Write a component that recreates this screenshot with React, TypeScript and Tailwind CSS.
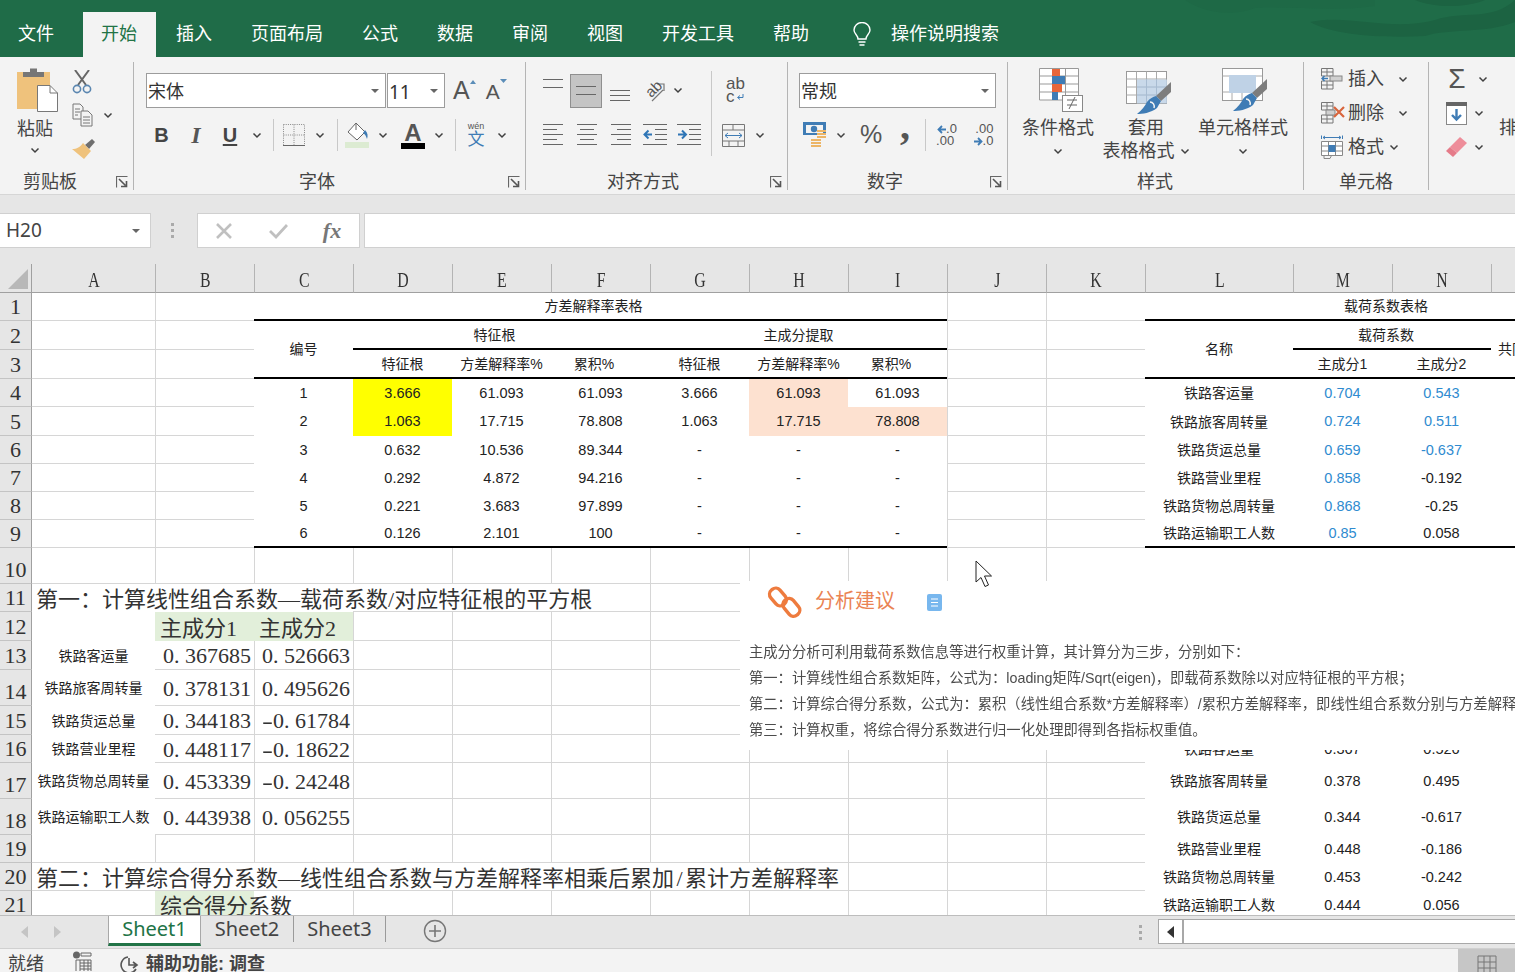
import React from 'react';

const sans = "[font-family:'Liberation_Sans','Noto_Sans_CJK_SC',sans-serif]";
const song = "[font-family:'Liberation_Serif','Noto_Sans_CJK_SC',serif] text-[22px] text-[#333]";
const digit = "[font-family:'Liberation_Serif',serif] text-[22px] text-[#333]";
const line = 'border-l border-b border-[#d6d6d6]';
const under = 'border-b border-[#d6d6d6]';
const cell = 'flex items-center justify-center whitespace-nowrap pt-[1px]';
const lab = 'text-[14px]';
const thick = 'border-b-2 border-black';
const blue = 'text-[#2f8bd0]';
const peach = 'bg-[#fde1d0]';
const yellow = 'bg-[#ffff00]';

const Chev = ({ className = '' }: { className?: string }) => (
  <svg width="10" height="7" viewBox="0 0 10 7" className={`shrink-0 ${className}`}>
    <path d="M1.5 1.5 L5 5 L8.5 1.5" fill="none" stroke="#404040" strokeWidth="1.5" />
  </svg>
);

const Launcher = ({ className = '' }: { className?: string }) => (
  <svg width="12" height="12" viewBox="0 0 12 12" className={`shrink-0 ${className}`}>
    <path d="M0.5 11.5 V0.5 H11.5" fill="none" stroke="#666" strokeWidth="1.2" />
    <path d="M3 3 L9.5 9.5 M10.5 5 V10.5 H5" fill="none" stroke="#555" strokeWidth="1.6" />
  </svg>
);

const DropTri = ({ className = '' }: { className?: string }) => (
  <svg width="8" height="4" viewBox="0 0 8 4" className={`shrink-0 ${className}`}>
    <path d="M0 0 H8 L4 4 Z" fill="#666" />
  </svg>
);

const Sep = ({ h = 'h-[32px]' }: { h?: string }) => <div className={`w-px bg-[#c8c8c8] ${h}`} />;

const Box = ({ w, children }: { w: string; children?: React.ReactNode }) => (
  <div className={`flex h-full shrink-0 items-center justify-center ${w}`}>{children}</div>
);

// alignment icons, one row of bars per width
const Bars = ({ rows, align = 'left', gap = 5 }: { rows: number[]; align?: string; gap?: number }) => (
  <svg width="20" height={(rows.length - 1) * gap + 1} className="shrink-0">
    {rows.map((w, i) => {
      const x = align === 'left' ? 0 : align === 'center' ? (20 - w) / 2 : 20 - w;
      return <rect key={i} x={x} y={i * gap} width={w} height="1" fill="#666" />;
    })}
  </svg>
);

const IndentBars = ({ flip }: { flip?: boolean }) => (
  <svg width="24" height="21" viewBox="0 0 24 21" className="shrink-0">
    <path d="M0 0.5 H24 M12 5.5 H24 M12 10.5 H24 M12 15.5 H24 M0 20.5 H24" stroke="#666" fill="none" />
    {flip ? (
      <path d="M1 10.5 H8 M5 6.5 L9 10.5 L5 14.5" stroke="#2e75b6" strokeWidth="2" fill="none" />
    ) : (
      <path d="M9 10.5 H2 M5.5 6.5 L1.5 10.5 L5.5 14.5" stroke="#2e75b6" strokeWidth="2" fill="none" />
    )}
  </svg>
);

const PasteIcon = () => (
  <svg width="42" height="46" viewBox="0 0 42 46" className="shrink-0">
    <rect x="0" y="5" width="33" height="37" fill="#efc27c" />
    <path d="M6 5 H27 V10 H6 Z M13 1.5 H20 V5 H13 Z" fill="#767676" />
    <path d="M20.5 18.5 H33 L40.5 26 V44.5 H20.5 Z" fill="#fff" stroke="#777" />
    <path d="M33 18.5 V26 H40.5" fill="none" stroke="#777" />
  </svg>
);

const Scissors = () => (
  <svg width="20" height="24" viewBox="0 0 20 24" className="shrink-0">
    <path d="M3 0 L14 15 M17 0 L6 15" stroke="#666" strokeWidth="2" fill="none" />
    <circle cx="5" cy="19" r="3.6" fill="none" stroke="#5a86b0" strokeWidth="1.6" />
    <circle cx="15" cy="19" r="3.6" fill="none" stroke="#5a86b0" strokeWidth="1.6" />
  </svg>
);

const CopyIcon = () => (
  <svg width="22" height="24" viewBox="0 0 22 24" className="shrink-0">
    <path d="M1 1 H8 L11 4 V16 H1 Z M3 6 H8 M3 9 H8 M3 12 H6" fill="#f3f3f3" stroke="#777" />
    <path d="M9 8 H16 L20 12 V23 H9 Z M11 14 H18 M11 17 H18 M11 20 H18" fill="#f3f3f3" stroke="#777" />
  </svg>
);

const Brush = () => (
  <svg width="24" height="22" viewBox="0 0 24 22" className="shrink-0">
    <path d="M13 7 L20 1 L23 4 L17 11 Z" fill="#6f6f6f" />
    <path d="M11 5 L19 13 L12 21 L0 11 C5 11 8 9 11 5 Z" fill="#efc27c" />
  </svg>
);

const BorderIcon = () => (
  <svg width="22" height="22" viewBox="0 0 22 22" className="shrink-0">
    <path d="M0.5 0.5 H21.5 V21 M0.5 0.5 V21 M11 0.5 V21 M0.5 11 H21.5" fill="none" stroke="#888" strokeDasharray="1 1.2" />
    <path d="M0 21.5 H22" stroke="#666" />
  </svg>
);

const FillIcon = () => (
  <svg width="24" height="26" viewBox="0 0 24 26" className="shrink-0">
    <rect x="0" y="20" width="24" height="6" fill="#dcebd2" />
    <path d="M11 1 L20 10 L12 18 L3 10 Z" fill="#fff" stroke="#666" />
    <path d="M11 2 V8" stroke="#666" />
    <path d="M20 8 C23 11 23 14 22 17 C21 14 20 12 18 11 Z" fill="#3f7cb5" />
  </svg>
);

const CondFormat = () => (
  <svg width="44" height="46" viewBox="0 0 44 46" className="shrink-0">
    <path d="M0.5 0.5 H39.5 V32 H0.5 Z M13.5 0.5 V32 M26.5 0.5 V32 M0.5 8 H39.5 M0.5 16 H39.5 M0.5 24 H39.5" fill="#fff" stroke="#999" />
    <rect x="13" y="1" width="8" height="7" fill="#e8663a" />
    <rect x="13" y="8" width="13" height="8" fill="#3f7cb5" />
    <rect x="13" y="16" width="10" height="8" fill="#e8663a" />
    <rect x="13" y="24" width="6" height="8" fill="#3f7cb5" />
    <rect x="23.5" y="27.5" width="20" height="16" fill="#fff" stroke="#888" />
    <path d="M28 32 H38 M28 37 H38 M36 29 L30 41" stroke="#666" fill="none" />
  </svg>
);

const TableFormat = ({ plain }: { plain?: boolean }) => (
  <svg width="46" height="44" viewBox="0 0 46 44" className="shrink-0">
    <rect x="0.5" y="0.5" width="40" height="32" fill="#fff" stroke="#999" />
    {plain ? (
      <>
        <path d="M0.5 8 H7 M34 8 H40 M0.5 24 H7 M34 24 H40 M10 24 V32 M20 24 V32 M30 24 V32" stroke="#aaa" fill="none" />
        <rect x="7" y="7" width="27" height="18" fill="#bfd2e6" />
      </>
    ) : (
      <>
        <path d="M10.5 0.5 V32 M20.5 0.5 V32 M30.5 0.5 V32 M0.5 8 H40 M0.5 16 H40 M0.5 24 H40" stroke="#aaa" fill="none" />
        <rect x="11" y="8.5" width="30" height="24" fill="#bfd2e6" opacity="0.85" />
        <path d="M20.5 8 V32 M30.5 8 V32 M11 16 H41 M11 24 H41" stroke="#a8bcd2" fill="none" />
      </>
    )}
    <path d="M45 11 V21 L35 30 L30 25 Z" fill="#7d7d7d" />
    <path d="M30 25 L35 30 L31 37 C25 42 16 43 11 43 C16 39 19 35 21 31 C24 27 27 26 30 25 Z" fill="#3f7cb5" />
    <path d="M24 31 C27 31 29 34 28 37" fill="none" stroke="#f3f3f3" strokeWidth="1.5" />
  </svg>
);

const CellGrid = () => (
  <path d="M0.5 0.5 H12 V8 H0.5 Z M6 0.5 V8 M0.5 4 H12 M0.5 13 H12 V21 H0.5 Z M6 13 V21 M0.5 17 H12" fill="none" stroke="#777" />
);

const InsertCells = () => (
  <svg width="22" height="22" viewBox="0 0 22 22" className="shrink-0">
    <CellGrid />
    <rect x="9" y="8" width="12" height="5" fill="#d0d0d0" stroke="#888" />
    <path d="M7 10.5 H1 M3.5 8 L1 10.5 L3.5 13" stroke="#3f7cb5" strokeWidth="1.5" fill="none" />
  </svg>
);

const DeleteCells = () => (
  <svg width="24" height="22" viewBox="0 0 24 22" className="shrink-0">
    <CellGrid />
    <rect x="5" y="8" width="9" height="5" fill="#d0d0d0" stroke="#888" />
    <path d="M13 5 L23 15 M23 5 L13 15" stroke="#d8643c" strokeWidth="2.2" />
  </svg>
);

const FormatCells = () => (
  <svg width="22" height="24" viewBox="0 0 22 24" className="shrink-0">
    <path d="M0.5 0.5 V4 M21.5 0.5 V4 M2 2.5 H20 M2 2.5 L4 1 M2 2.5 L4 4 M20 2.5 L18 1 M20 2.5 L18 4" stroke="#3f7cb5" fill="none" />
    <path d="M0.5 6.5 H21.5 V20.5 H0.5 Z M7.5 6.5 V20.5 M14.5 6.5 V20.5 M0.5 11 H21.5 M0.5 16 H21.5" fill="#fff" stroke="#888" />
    <rect x="7.5" y="10" width="7" height="7" fill="#3f7cb5" />
    <path d="M3 20.5 V23.5 H9 L10.5 20.5" stroke="#888" fill="none" />
  </svg>
);

const FillDown = () => (
  <svg width="21" height="23" viewBox="0 0 21 23" className="shrink-0">
    <rect x="0.5" y="0.5" width="20" height="22" fill="#fff" stroke="#888" />
    <rect x="0" y="0" width="21" height="4" fill="#666" />
    <path d="M10.5 7 V17 M6 13 L10.5 17.5 L15 13" stroke="#3f7cb5" strokeWidth="2.4" fill="none" />
  </svg>
);

const Eraser = () => (
  <svg width="21" height="20" viewBox="0 0 21 20" className="shrink-0">
    <path d="M14 0 L21 6 L11 16 L4 10 Z" fill="#ee8d9a" />
    <path d="M4 10 L11 16 L7 20 L0 14 Z" fill="#e57b89" />
  </svg>
);

const Accounting = () => (
  <svg width="24" height="26" viewBox="0 0 24 26" className="shrink-0">
    <rect x="0" y="0" width="23" height="13" fill="#3f7cb5" />
    <rect x="3" y="3" width="17" height="8" fill="#f3f3f3" />
    <circle cx="11" cy="7" r="3.2" fill="#3f7cb5" />
    <path d="M14 9 H23 M14 12 H23 M14 15 H23 M8 18 H18 M8 21 H18 M8 24 H18" stroke="#ecb566" strokeWidth="2" fill="none" />
  </svg>
);

const Arrow = ({ right }: { right?: boolean }) => (
  <svg width="9" height="9" viewBox="0 0 9 9" className="shrink-0">
    {right ? (
      <path d="M0 4.5 H7 M4 1 L7.5 4.5 L4 8" stroke="#3f7cb5" strokeWidth="1.8" fill="none" />
    ) : (
      <path d="M9 4.5 H2 M5 1 L1.5 4.5 L5 8" stroke="#3f7cb5" strokeWidth="1.8" fill="none" />
    )}
  </svg>
);

const Group = ({ w, label, labelW, launcher, children }: { w: string; label: string; labelW: string; launcher?: boolean; children: React.ReactNode }) => (
  <div className={`flex h-full shrink-0 flex-col border-r border-[#b4b4b4] ${w}`}>
    <div className="h-[112px] shrink-0">{children}</div>
    <div className="flex h-[16px] shrink-0 items-center">
      <div className={`text-center text-[18px] leading-[20px] text-[#444] ${labelW}`}>{label}</div>
      {launcher && <Launcher className="mr-[5px] ml-auto" />}
    </div>
  </div>
);

const Select = ({ w, text, tri, font = 'text-[18px]' }: { w: string; text: string; tri: string; font?: string }) => (
  <div className={`flex h-[35px] shrink-0 items-center border border-[#9c9c9c] bg-white pl-[1px] text-[#333] ${w} ${font}`}>
    <span className="flex-1 pt-[3px]">{text}</span>
    <DropTri className={tri} />
  </div>
);

const BigLabel = ({ children }: { children: React.ReactNode }) => (
  <div className="text-center text-[18px] leading-[23px] whitespace-nowrap text-[#444]">{children}</div>
);

const tabs = ['插入', '页面布局', '公式', '数据', '审阅', '视图', '开发工具', '帮助'];

const Title = () => (
  <div className="relative flex h-[57px] shrink-0 items-end overflow-hidden bg-[#1f6c48] text-[18px] text-white">
    <svg width="330" height="57" viewBox="0 0 330 57" className="absolute top-0 right-0">
      <path d="M0 0 C20 14 50 16 70 8 C110 6 150 12 190 6 L190 0 Z" fill="#1e6946" />
      <path d="M125 22 C165 14 205 32 250 20 C280 10 305 22 330 0 V22 C300 34 265 28 240 36 C200 38 150 36 125 22 Z" fill="#1c6342" />
      <path d="M230 0 C250 8 280 8 300 0 Z" fill="#1c6342" />
    </svg>
    <div className="flex h-[45px] w-[83px] items-center pl-[18px]">文件</div>
    <div className="flex h-[45px] w-[73px] items-center justify-center bg-[#f3f3f3] pr-[1px] text-[#217346]">开始</div>
    <div className="flex h-[45px] items-center pl-[20px]">
      {tabs.map((t) => (
        <div key={t} className="pr-[39px] whitespace-nowrap">{t}</div>
      ))}
      <svg width="24" height="25" viewBox="0 0 24 25" className="mr-[17px] ml-[2px] shrink-0">
        <path d="M8 17 C8 13 4 12 4 8 A8 7.5 0 0 1 20 8 C20 12 16 13 16 17 Z" fill="none" stroke="#fff" strokeWidth="1.4" />
        <path d="M8.5 20 H15.5 M9.5 23 H14.5" stroke="#fff" strokeWidth="1.6" />
      </svg>
      <div className="whitespace-nowrap">操作说明搜索</div>
    </div>
  </div>
);

const Ribbon = () => (
  <div className="flex h-[138px] shrink-0 border-b border-[#d6d6d6] bg-[#f3f3f3] py-[5px] pb-[4px]">
    <Group w="w-[134px]" label="剪贴板" labelW="w-[100px]" launcher>
      <div className="flex h-full">
        <div className="flex w-[70px] flex-col items-center pt-[5px] text-[18px] text-[#444]">
          <div className="ml-[6px]"><PasteIcon /></div>
          <div className="mt-[4px] leading-[24px]">粘贴</div>
          <Chev className="mt-[6px]" />
        </div>
        <div className="flex flex-col pl-[2px]">
          <div className="flex h-[32px] items-end"><Scissors /></div>
          <div className="mt-[9px] flex h-[24px] items-center"><CopyIcon /><Chev className="ml-[9px]" /></div>
          <div className="mt-[11px] flex"><Brush /></div>
        </div>
      </div>
    </Group>

    <Group w="w-[392px]" label="字体" labelW="w-[366px]" launcher>
      <div className="flex h-full flex-col pt-[11px] pl-[12px]">
        <div className="flex h-[35px] items-center">
          <Select w="w-[240px]" text="宋体" tri="mr-[6px]" />
          <Select w="w-[58px] ml-px" text="11" tri="mr-[6px]" font="text-[19px] [font-family:'Noto_Sans',sans-serif]" />
          <div className="ml-[8px] flex items-start">
            <span className="text-[25px] leading-[25px] text-[#555]">A</span>
            <svg width="6" height="4" className="mt-[2px]"><path d="M0 4 H6 L3 0 Z" fill="#5b8db8" /></svg>
          </div>
          <div className="ml-[10px] flex items-start">
            <span className="mt-[2px] text-[21px] leading-[23px] text-[#555]">A</span>
            <svg width="7" height="4" className="mt-px"><path d="M0 0 H7 L3.5 4 Z" fill="#5b8db8" /></svg>
          </div>
        </div>
        <div className="mt-[15px] flex h-[24px] items-center text-[#444]">
          <Box w="w-[31px]"><span className="text-[20px] font-bold">B</span></Box>
          <Box w="w-[38px]"><span className="[font-family:'Liberation_Serif',serif] text-[24px] font-bold text-[#555] italic">I</span></Box>
          <Box w="w-[30px]"><span className="text-[20px] font-bold underline underline-offset-2">U</span></Box>
          <Box w="w-[24px]"><Chev /></Box>
          <Box w="w-[8px]"><Sep /></Box>
          <Box w="w-[34px]"><BorderIcon /></Box>
          <Box w="w-[18px]"><Chev /></Box>
          <Box w="w-[16px]"><Sep /></Box>
          <Box w="w-[24px]"><FillIcon /></Box>
          <Box w="w-[28px]"><Chev /></Box>
          <Box w="w-[32px]">
            <div className="flex flex-col items-center">
              <span className="text-[24px] leading-[21px] font-bold text-[#555]">A</span>
              <div className="h-[6px] w-[24px] bg-black" />
            </div>
          </Box>
          <Box w="w-[20px]"><Chev /></Box>
          <Box w="w-[12px]"><Sep /></Box>
          <Box w="w-[30px]">
            <div className="flex flex-col items-center">
              <span className="text-[9px] leading-[9px] text-[#555]">wén</span>
              <span className="text-[17px] leading-[17px] text-[#3f7cb5]">文</span>
            </div>
          </Box>
          <Box w="w-[22px]"><Chev /></Box>
        </div>
      </div>
    </Group>

    <Group w="w-[262px]" label="对齐方式" labelW="w-[234px]" launcher>
      <div className="flex h-full pt-[11px] pl-[10px]">
        <div className="flex flex-col">
          <div className="flex h-[35px] items-center">
            <Box w="w-[34px]"><div className="flex -translate-y-[7px]"><Bars rows={[20, 20]} gap={8} /></div></Box>
            <div className="flex h-[34px] w-[32px] items-center justify-center border border-[#8f8f8f] bg-[#c4c4c4]"><Bars rows={[20, 20]} gap={8} /></div>
            <Box w="w-[35px]"><div className="flex translate-y-[5px]"><Bars rows={[20, 20, 20]} /></div></Box>
            <Box w="w-[36px]">
              <div className="grid h-[24px] w-[24px] place-items-center">
                <span className="[grid-area:1/1] -translate-x-[2px] -translate-y-[2px] -rotate-45 text-[15px] leading-[15px] text-[#555]">ab</span>
                <svg width="22" height="22" viewBox="0 0 22 22" className="[grid-area:1/1]"><path d="M8 21 L19 10 M13 4 H20 V11" fill="none" stroke="#777" strokeWidth="1.2" /></svg>
              </div>
            </Box>
            <Chev />
            <div className="w-[26px]" />
          </div>
          <div className="mt-[14px] flex h-[24px] items-center">
            <Box w="w-[34px]"><Bars rows={[20, 14, 20, 14, 20]} /></Box>
            <Box w="w-[34px]"><Bars rows={[20, 14, 20, 14, 20]} align="center" /></Box>
            <Box w="w-[34px]"><Bars rows={[20, 14, 20, 14, 20]} align="right" /></Box>
            <Box w="w-[34px]"><IndentBars /></Box>
            <Box w="w-[34px]"><IndentBars flip /></Box>
          </div>
        </div>
        <div className="mt-[-2px] ml-[2px]"><Sep h="h-[85px]" /></div>
        <div className="flex flex-col pl-[10px]">
          <div className="flex h-[35px] flex-col items-start pt-[4px] pl-[4px] text-[17px] leading-[13px] text-[#555]">
            <span>ab</span>
            <span className="flex items-center">c<svg width="9" height="8" className="ml-px"><path d="M7 1 V4.5 H2 M4 2.5 L1.5 4.5 L4 6.5" fill="none" stroke="#3f7cb5" /></svg></span>
          </div>
          <div className="mt-[15px] flex h-[24px] items-center">
            <svg width="23" height="23" viewBox="0 0 23 23" className="shrink-0">
              <path d="M0.5 0.5 H22.5 V22.5 H0.5 Z M0.5 6 H22.5 M0.5 17 H22.5 M11 0.5 V6 M7 17 V22.5 M16 17 V22.5" fill="#f3f3f3" stroke="#777" />
              <path d="M3 11.5 H20 M6 9 L3 11.5 L6 14 M17 9 L20 11.5 L17 14" stroke="#3f7cb5" fill="none" />
            </svg>
            <Chev className="ml-[10px]" />
          </div>
        </div>
      </div>
    </Group>

    <Group w="w-[220px]" label="数字" labelW="w-[194px]" launcher>
      <div className="flex h-full flex-col pt-[11px] pl-[11px]">
        <Select w="w-[197px]" text="常规" tri="mr-[6px]" />
        <div className="mt-[15px] -ml-[3px] flex h-[24px] items-center">
          <Box w="w-[38px]"><Accounting /></Box>
          <Box w="w-[14px]"><Chev /></Box>
          <Box w="w-[46px]"><span className="text-[25px] text-[#555]">%</span></Box>
          <Box w="w-[22px]"><span className="-translate-y-[9px] [font-family:'Liberation_Serif',serif] text-[40px] leading-[20px] font-bold text-[#555]">,</span></Box>
          <Box w="w-[5px]" />
          <Box w="w-[8px]"><Sep /></Box>
          <Box w="w-[35px]">
            <div className="flex flex-col text-[13px] leading-[12px] text-[#555]">
              <span className="flex items-center pl-px"><Arrow /><span>.0</span></span>
              <span>.00</span>
            </div>
          </Box>
          <Box w="w-[39px]">
            <div className="flex flex-col items-end text-[13px] leading-[12px] text-[#555]">
              <span>.00</span>
              <span className="flex items-center"><Arrow right /><span>.0</span></span>
            </div>
          </Box>
        </div>
      </div>
    </Group>

    <Group w="w-[296px]" label="样式" labelW="w-[294px]">
      <div className="flex h-full pl-[6px]">
        <div className="flex w-[88px] flex-col items-center pt-[6px]">
          <div className="ml-[6px] h-[46px]"><CondFormat /></div>
          <div className="mt-[3px]"><BigLabel>条件格式</BigLabel></div>
          <Chev className="mt-[8px]" />
        </div>
        <div className="flex w-[88px] flex-col items-center pt-[9px]">
          <div className="ml-[6px] h-[46px]"><TableFormat /></div>
          <BigLabel>套用</BigLabel>
          <div className="flex items-center"><BigLabel>表格格式</BigLabel><Chev className="ml-[5px]" /></div>
        </div>
        <div className="ml-[8px] flex w-[90px] flex-col items-center pt-[6px]">
          <div className="ml-[4px] h-[46px]"><TableFormat plain /></div>
          <div className="mt-[3px]"><BigLabel>单元格样式</BigLabel></div>
          <Chev className="mt-[8px]" />
        </div>
      </div>
    </Group>

    <Group w="w-[125px]" label="单元格" labelW="w-[124px]">
      <div className="flex h-full flex-col pl-[17px] text-[18px] text-[#444]">
        <div className="flex h-[34px] items-center"><div className="w-[22px]"><InsertCells /></div><span className="ml-[5px]">插入</span><Chev className="ml-[14px]" /></div>
        <div className="flex h-[34px] items-center"><div className="w-[22px]"><DeleteCells /></div><span className="ml-[5px]">删除</span><Chev className="ml-[14px]" /></div>
        <div className="flex h-[34px] items-center"><div className="w-[22px]"><FormatCells /></div><span className="ml-[5px]">格式</span><Chev className="ml-[5px]" /></div>
      </div>
    </Group>

    <div className="flex h-[108px] flex-1 pl-[17px]">
      <div className="flex flex-col">
        <div className="flex h-[34px] items-center"><span className="w-[22px] text-center text-[28px] leading-[28px] text-[#555]">Σ</span><Chev className="ml-[10px]" /></div>
        <div className="flex h-[34px] items-center"><FillDown /><Chev className="ml-[7px]" /></div>
        <div className="flex h-[34px] items-center"><Eraser /><Chev className="ml-[7px]" /></div>
      </div>
      <div className="mt-[55px] ml-[11px] text-[18px] leading-[23px] whitespace-nowrap text-[#444]">排</div>
    </div>
  </div>
);

const FormulaBar = () => (
  <div className="flex h-[69px] shrink-0 items-start bg-[#e6e6e6] pt-[18px]">
    <div className="flex h-[35px] w-[151px] shrink-0 items-center border border-l-0 border-[#d0d0d0] bg-white pl-[6px] [font-family:'Noto_Sans',sans-serif] text-[19px] text-[#444]">
      <span className="flex-1">H20</span>
      <DropTri className="mr-[10px]" />
    </div>
    <div className="flex h-[35px] w-[46px] shrink-0 flex-col items-center justify-center gap-[3px] pr-[4px]">
      <div className="h-[3px] w-[3px] bg-[#aaa]" />
      <div className="h-[3px] w-[3px] bg-[#aaa]" />
      <div className="h-[3px] w-[3px] bg-[#aaa]" />
    </div>
    <div className="flex h-[35px] w-[163px] shrink-0 items-center border border-[#d0d0d0] bg-white">
      <Box w="w-[52px]">
        <svg width="18" height="18" viewBox="0 0 18 18"><path d="M2 2 L16 16 M16 2 L2 16" stroke="#c0c0c0" strokeWidth="2.6" /></svg>
      </Box>
      <Box w="w-[56px]">
        <svg width="20" height="16" viewBox="0 0 20 16"><path d="M2 8 L8 14 L19 2" stroke="#c0c0c0" strokeWidth="2.8" fill="none" /></svg>
      </Box>
      <Box w="w-[52px]"><span className="[font-family:'Liberation_Serif',serif] text-[22px] font-bold text-[#777] italic">fx</span></Box>
    </div>
    <div className="ml-[4px] h-[35px] flex-1 border border-r-0 border-[#d0d0d0] bg-white" />
  </div>
);

const colHead = ['A', 'B', 'C', 'D', 'E', 'F', 'G', 'H', 'I', 'J', 'K', 'L', 'M', 'N', 'O', 'P'];
const Blank = ({ c = line }: { c?: string }) => <div className={c} />;
const Blanks = ({ n }: { n: number }) => <>{Array.from({ length: n }, (_, i) => <Blank key={i} />)}</>;
const RowHead = ({ n }: { n: number }) => (
  <div className={`flex items-end justify-center border-r border-b border-r-[#a0a0a0] border-b-[#c4c4c4] bg-[#e6e6e6] leading-[26px] ${digit}`}>{n}</div>
);
const T = ({ c = '', children }: { c?: string; children?: React.ReactNode }) => <div className={`${cell} ${c}`}>{children}</div>;

// SimSun gives the point and the minus a full half-width slot
const Num = ({ v }: { v: string }) => (
  <>
    {v.split('').map((ch, i) =>
      ch === '.' ? (
        <span key={i} className="inline-block w-[11px]">{ch}</span>
      ) : ch === '-' ? (
        <span key={i} className="inline-block w-[11px] scale-x-150 text-center">{ch}</span>
      ) : (
        <span key={i}>{ch}</span>
      ),
    )}
  </>
);

const upper: [number, string, string, string, string, string, string][] = [
  [1, '3.666', '61.093', '61.093', '3.666', '61.093', '61.093'],
  [2, '1.063', '17.715', '78.808', '1.063', '17.715', '78.808'],
  [3, '0.632', '10.536', '89.344', '-', '-', '-'],
  [4, '0.292', '4.872', '94.216', '-', '-', '-'],
  [5, '0.221', '3.683', '97.899', '-', '-', '-'],
  [6, '0.126', '2.101', '100', '-', '-', '-'],
];
const loads: [string, string, string, boolean][] = [
  ['铁路客运量', '0.704', '0.543', true],
  ['铁路旅客周转量', '0.724', '0.511', true],
  ['铁路货运总量', '0.659', '-0.637', true],
  ['铁路营业里程', '0.858', '-0.192', false],
  ['铁路货物总周转量', '0.868', '-0.25', false],
  ['铁路运输职工人数', '0.85', '0.058', false],
];
const coef: [string, string, string][] = [
  ['铁路客运量', '0.367685', '0.526663'],
  ['铁路旅客周转量', '0.378131', '0.495626'],
  ['铁路货运总量', '0.344183', '-0.61784'],
  ['铁路营业里程', '0.448117', '-0.18622'],
  ['铁路货物总周转量', '0.453339', '-0.24248'],
  ['铁路运输职工人数', '0.443938', '0.056255'],
];
const lower: [string, string, string][] = [
  ['铁路客运量', '0.367', '0.526'],
  ['铁路旅客周转量', '0.378', '0.495'],
  ['铁路货运总量', '0.344', '-0.617'],
  ['铁路营业里程', '0.448', '-0.186'],
  ['铁路货物总周转量', '0.453', '-0.242'],
  ['铁路运输职工人数', '0.444', '0.056'],
];

const Lower = ({ i }: { i: number }) => (
  <>
    <T c={lab}>{lower[i][0]}</T>
    <T>{lower[i][1]}</T>
    <T>{lower[i][2]}</T>
    <Blank c="" />
    <Blank c="" />
  </>
);

const Sheet = () => (
  <div className={`grid h-[651px] shrink-0 grid-cols-[32px_123px_99px_99px_99px_99px_99px_99px_99px_99px_99px_99px_148px_99px_99px_99px_37px] grid-rows-[29px_28px_29px_29px_28px_29px_28px_28px_28px_28px_36px_28px_29px_29px_36px_29px_28px_36px_36px_28px_28px_28px] overflow-hidden bg-white text-[14.5px] text-[#222] ${sans}`}>
    <div className="flex items-end justify-end border-r border-b border-r-[#a0a0a0] border-b-[#a0a0a0] bg-[#e6e6e6] pr-[3px] pb-[3px]">
      <svg width="20" height="20"><path d="M0 20 L20 0 V20 Z" fill="#b8b8b8" /></svg>
    </div>
    {colHead.map((c, i) => (
      <div key={c} className={`flex items-end justify-center border-b border-b-[#a0a0a0] bg-[#e6e6e6] leading-[25px] ${i > 0 ? 'border-l border-l-[#b4b4b4]' : ''} ${digit}`}>
        <span className="inline-block scale-x-[0.72]">{c}</span>
      </div>
    ))}

    <RowHead n={1} />
    <Blank c={under} />
    <Blank />
    <T c={`col-span-7 pr-[14px] ${lab} ${thick}`}>方差解释率表格</T>
    <Blanks n={2} />
    <T c={`col-span-5 pr-[0px] ${lab} ${thick}`}>载荷系数表格</T>

    <RowHead n={2} />
    <Blank c={under} />
    <Blank />
    <T c={`row-span-2 ${lab} ${thick}`}>编号</T>
    <T c={`col-span-3 pr-[14px] ${lab} ${thick}`}>特征根</T>
    <T c={`col-span-3 ${lab} ${thick}`}>主成分提取</T>
    <Blanks n={2} />
    <T c={`row-span-2 ${lab} ${thick}`}>名称</T>
    <T c={`col-span-2 pr-[12px] ${lab} ${thick}`}>载荷系数</T>
    <T c={`row-span-2 justify-start pl-[7px] ${lab} ${thick}`}>共同度</T>
    <T c={`row-span-2 ${thick}`} />

    <RowHead n={3} />
    <Blank c={under} />
    <Blank />
    {['特征根', '方差解释率%', '累积%', '特征根', '方差解释率%', '累积%'].map((t, i) => (
      <T key={i} c={`${lab} ${thick} ${i % 3 === 2 ? 'pr-[13px]' : ''}`}>{t}</T>
    ))}
    <Blanks n={2} />
    <T c={`${lab} ${thick}`}>主成分1</T>
    <T c={`${lab} ${thick}`}>主成分2</T>

    {upper.map((r, i) => {
      const end = i === 5 ? thick : '';
      return (
        <React.Fragment key={r[0]}>
          <RowHead n={i + 4} />
          <Blank c={under} />
          <Blank />
          <T c={end}>{r[0]}</T>
          <T c={`${end} ${i < 2 ? yellow : ''}`}>{r[1]}</T>
          <T c={end}>{r[2]}</T>
          <T c={end}>{r[3]}</T>
          <T c={end}>{r[4]}</T>
          <T c={`${end} ${i < 2 ? peach : ''}`}>{r[5]}</T>
          <T c={`${end} ${i === 1 ? peach : ''}`}>{r[6]}</T>
          <Blanks n={2} />
          <T c={`${lab} ${end}`}>{loads[i][0]}</T>
          <T c={`${end} ${blue}`}>{loads[i][1]}</T>
          <T c={`${end} ${loads[i][3] ? blue : ''}`}>{loads[i][2]}</T>
          <T c={end} />
          <T c={end} />
        </React.Fragment>
      );
    })}

    <RowHead n={10} />
    <Blank c={under} />
    <Blanks n={10} />
    <Blank c="col-span-5" />

    <RowHead n={11} />
    <div className={`flex items-center pt-[3px] pl-[4px] whitespace-nowrap ${song}`}>第一：计算线性组合系数—载荷系数<span className="inline-block w-[11px] text-center">/</span>对应特征根的平方根</div>
    <Blank c="" />
    <Blank c="" />
    <Blank c={under} />
    <Blank c={under} />
    <Blank c={under} />
    <Blanks n={5} />
    <Blank c="col-span-5" />

    <RowHead n={12} />
    <Blank c="" />
    <div className={`flex items-center bg-[#e2efda] pt-[3px] pl-[5px] whitespace-nowrap ${song}`}>主成分1</div>
    <div className={`flex items-center bg-[#e2efda] pt-[3px] pl-[5px] whitespace-nowrap ${song}`}>主成分2</div>
    <Blanks n={8} />
    <Blank c="col-span-5" />

    {coef.map((r, i) => (
      <React.Fragment key={r[0]}>
        <RowHead n={i + 13} />
        <T c={lab}>{r[0]}</T>
        <div className={`flex items-center justify-end pt-[1px] pr-[3px] whitespace-nowrap ${under} ${digit}`}><Num v={r[1]} /></div>
        <div className={`flex items-center justify-end pt-[1px] pr-[3px] whitespace-nowrap ${line} ${digit}`}><Num v={r[2]} /></div>
        <Blanks n={8} />
        {i < 3 ? <Blank c="col-span-5" /> : <Lower i={i - 3} />}
      </React.Fragment>
    ))}

    <RowHead n={19} />
    <Blank c={under} />
    <Blanks n={10} />
    <Lower i={3} />

    <RowHead n={20} />
    <div className={`col-span-8 flex items-center border-b border-[#d6d6d6] pt-[3px] pl-[4px] whitespace-nowrap ${song}`}>第二：计算综合得分系数—线性组合系数与方差解释率相乘后累加<span className="inline-block w-[11px] text-center">/</span>累计方差解释率</div>
    <Blanks n={3} />
    <Lower i={4} />

    <RowHead n={21} />
    <Blank c={under} />
    <div className={`flex items-center bg-[#e2efda] pt-[3px] pl-[5px] whitespace-nowrap ${song}`}>综合得分系数</div>
    <Blank c={under} />
    <Blanks n={8} />
    <Lower i={5} />
  </div>
);

const Advice = () => (
  <div className={`absolute top-[317px] left-[740px] flex h-[169px] w-[775px] flex-col overflow-hidden bg-white pl-[9px] whitespace-nowrap text-[#4c4c4c] ${sans}`}>
    <div className="flex h-[39px] items-center">
      <svg width="36" height="32" viewBox="0 0 36 32" className="mt-[2px] ml-[18px] shrink-0">
        <rect x="5" y="1.5" width="12" height="19" rx="5.5" transform="rotate(-40 11 11)" fill="none" stroke="#ee7b3e" strokeWidth="3.4" />
        <rect x="18" y="12" width="12" height="19" rx="5.5" transform="rotate(-40 24 21)" fill="none" stroke="#ee7b3e" strokeWidth="3.4" />
      </svg>
      <span className="ml-[12px] text-[20px] text-[#ea8353]">分析建议</span>
      <svg width="15" height="17" viewBox="0 0 15 17" className="mt-[4px] ml-[32px] shrink-0">
        <rect width="15" height="17" rx="2" fill="#78b7ee" />
        <path d="M4 5 H11 M4 8.5 H11 M4 12 H11" stroke="#fff" strokeWidth="1.2" />
      </svg>
    </div>
    <div className="mt-[19px] text-[14.3px] leading-[26px] blur-[0.3px]">
      <div>主成分分析可利用载荷系数信息等进行权重计算，其计算分为三步，分别如下：</div>
      <div>第一：计算线性组合系数矩阵，公式为：loading矩阵/Sqrt(eigen)，即载荷系数除以对应特征根的平方根；</div>
      <div>第二：计算综合得分系数，公式为：累积（线性组合系数*方差解释率）/累积方差解释率，即线性组合系数分别与方差解释率相乘后累加；</div>
      <div>第三：计算权重，将综合得分系数进行归一化处理即得到各指标权重值。</div>
    </div>
  </div>
);

const Cursor = () => (
  <svg width="19" height="28" viewBox="0 0 19 28" className="absolute top-[296px] left-[975px]">
    <path d="M1 1 V22 L6 17.5 L10 26.5 L13.5 25 L9.5 16 H16.5 Z" fill="#fff" stroke="#222" strokeWidth="1" />
  </svg>
);

const SheetTabs = () => (
  <div className={`flex h-[33px] shrink-0 items-start border-t border-[#bdbdbd] bg-[#e6e6e6] ${sans}`}>
    <div className="flex h-[32px] w-[108px] shrink-0 items-center">
      <Box w="w-[48px]"><svg width="7" height="12"><path d="M7 0 V12 L0 6 Z" fill="#c4c4c4" /></svg></Box>
      <Box w="w-[18px]"><svg width="7" height="12"><path d="M0 0 V12 L7 6 Z" fill="#c4c4c4" /></svg></Box>
    </div>
    <div className="flex h-[30px] w-[93px] shrink-0 items-center justify-center border-x border-b-[3px] border-x-[#a8a8a8] border-b-[#217346] bg-white pb-[2px] [font-family:'Noto_Sans',sans-serif] text-[20px] text-[#217346]">Sheet1</div>
    <div className="flex h-[26px] w-[93px] shrink-0 items-center justify-center border-r border-[#9a9a9a] pb-[1px] [font-family:'Noto_Sans',sans-serif] text-[20px] text-[#444]">Sheet2</div>
    <div className="flex h-[26px] w-[92px] shrink-0 items-center justify-center border-r border-[#9a9a9a] pb-[1px] [font-family:'Noto_Sans',sans-serif] text-[20px] text-[#444]">Sheet3</div>
    <svg width="24" height="24" viewBox="0 0 24 24" className="mt-[3px] ml-[37px] shrink-0">
      <circle cx="12" cy="12" r="10.5" fill="none" stroke="#777" strokeWidth="1.4" />
      <path d="M12 6 V18 M6 12 H18" stroke="#777" strokeWidth="1.6" />
    </svg>
    <div className="ml-[691px] flex h-[32px] w-[4px] shrink-0 flex-col items-center justify-center gap-[3px]">
      <div className="h-[3px] w-[3px] bg-[#aaa]" />
      <div className="h-[3px] w-[3px] bg-[#aaa]" />
      <div className="h-[3px] w-[3px] bg-[#aaa]" />
    </div>
    <div className="mt-[3px] ml-[16px] flex h-[25px] flex-1 border border-r-0 border-[#a8a8a8] bg-white">
      <div className="flex w-[25px] items-center justify-center border-r-2 border-[#a8a8a8]">
        <svg width="7" height="12"><path d="M7 0 V12 L0 6 Z" fill="#333" /></svg>
      </div>
    </div>
  </div>
);

const StatusBar = () => (
  <div className="flex h-[24px] shrink-0 overflow-hidden border-t border-[#d0d0d0] bg-[#f3f3f3] text-[#444]">
    <div className="pt-[3px] pl-[8px] text-[18px] leading-[24px]">就绪</div>
    <svg width="20" height="20" viewBox="0 0 20 20" className="mt-[2px] ml-[28px] shrink-0">
      <circle cx="4.5" cy="4" r="3.5" fill="#666" />
      <path d="M9 2 H19 V5 H9 Z M4 9 H19 V20 M4 9 V20 M8 12 H19 M8 15 H19 M8 18 H19 M8 9 V20 M12 9 V20 M16 9 V20" stroke="#666" fill="none" />
    </svg>
    <svg width="20" height="20" viewBox="0 0 20 20" className="mt-[6px] ml-[28px] shrink-0">
      <path d="M8 2 A8 8 0 1 0 16 14" fill="none" stroke="#555" strokeWidth="1.6" />
      <path d="M9 3 V10 H17 M13 7 L17 10 L13 13" fill="none" stroke="#555" strokeWidth="1.6" />
    </svg>
    <div className="ml-[6px] pt-[3px] text-[18px] leading-[24px] font-bold whitespace-nowrap">辅助功能: 调查</div>
    <div className="ml-auto flex h-full w-[57px] items-start justify-center bg-[#c6c6c6] pt-[6px]">
      <svg width="20" height="20" viewBox="0 0 20 20"><path d="M1 1 H19 V20 M1 1 V20 M7 1 V20 M13 1 V20 M1 7 H19 M1 13 H19" fill="none" stroke="#777" /></svg>
    </div>
  </div>
);

export default function App() {
  return (
    <div className={`relative flex h-[972px] w-[1515px] flex-col overflow-hidden bg-white ${sans}`}>
      <Title />
      <Ribbon />
      <FormulaBar />
      <div className="relative h-[651px] shrink-0 overflow-hidden">
        <Sheet />
        <Advice />
        <Cursor />
      </div>
      <SheetTabs />
      <StatusBar />
    </div>
  );
}
